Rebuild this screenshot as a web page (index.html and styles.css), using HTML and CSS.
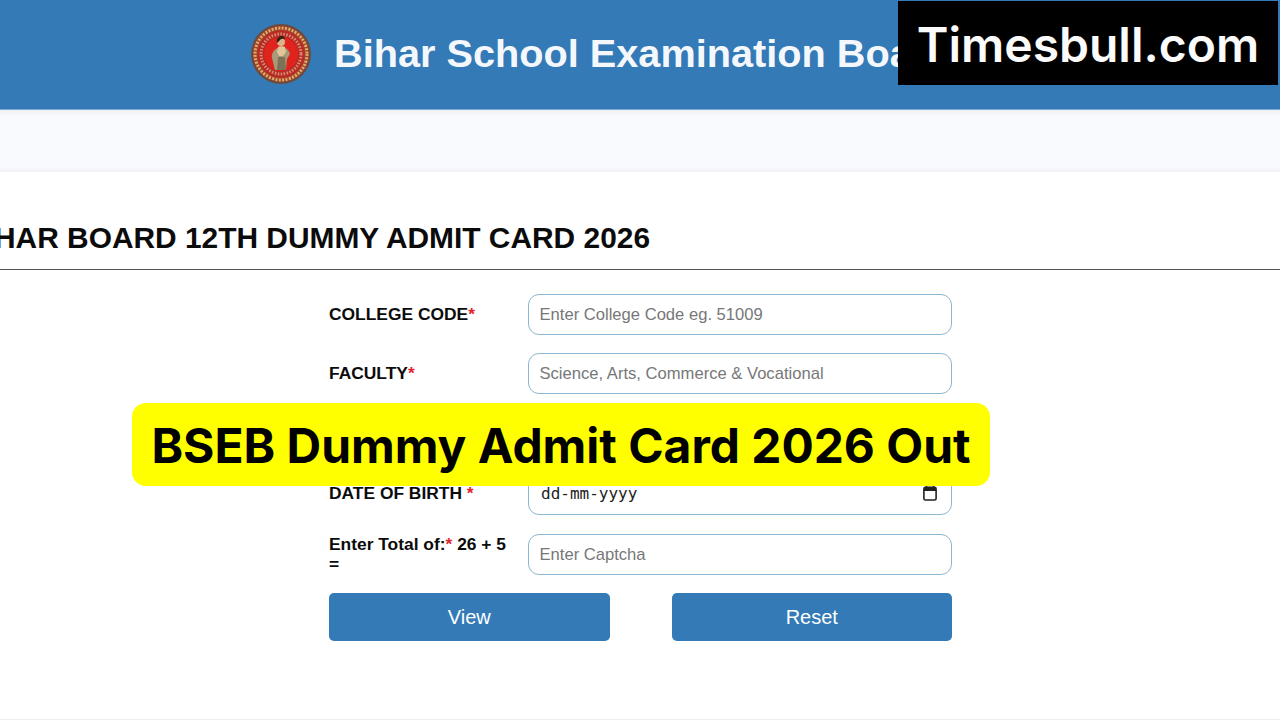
FILE: index.html
```html
<!DOCTYPE html>
<html lang="en">
<head>
    <meta charset="UTF-8">
    <title>BSEB Dummy Admit Card 2026 Out</title>
    <link rel="stylesheet" href="styles.css">
</head>
<body>
    <header class="site-header">
        <svg class="seal" viewBox="0 0 60 60" aria-hidden="true">
            <circle cx="30" cy="30" r="30" fill="#6d4a3c"/>
            <circle cx="30" cy="30" r="28" fill="#a8402c"/>
            <circle cx="30" cy="30" r="26" fill="none" stroke="#d8ae68" stroke-width="3" stroke-dasharray="2 1.4"/>
            <circle cx="30" cy="30" r="23.5" fill="#b92a22"/>
            <circle cx="30" cy="30" r="20" fill="none" stroke="#e3b9a0" stroke-width="3" stroke-dasharray="1.5 1.5" opacity="0.7"/>
            <circle cx="30" cy="30" r="17" fill="#e0231c"/>
            <path d="M24 46c-1-4-2-8-3-12s2-9 6-10l7 0c3 1 4 3 5 6l-3 5-1 11z" fill="#a89a78"/>
            <path d="M27 23c1-1 6-1 7 0l1 5-3 4h-4l-2-4z" fill="#e2c49a"/>
            <circle cx="30" cy="18" r="4" fill="#d9b48a"/>
            <path d="M26 19c-1-5 2-7 4.500-7s3.500 2 3.500 3.500c-2-1-3.500-1-4.500 0s-1.500 2-3.500 3.500z" fill="#33211a"/>
            <path d="M27 33h7l1 13h-9z" fill="#7d7258"/>
        </svg>
        <div class="site-title">Bihar School Examination Board</div>
    </header>
    <div class="sub-bar"></div>

    <main class="card">
        <h1 class="card-title">HAR BOARD 12TH DUMMY ADMIT CARD 2026</h1>
        <form class="admit-form">
            <div class="form-row first-row">
                <label class="form-label">COLLEGE CODE<span class="req">*</span></label>
                <input class="form-input" type="text" placeholder="Enter College Code eg. 51009">
            </div>
            <div class="form-row">
                <label class="form-label">FACULTY<span class="req">*</span></label>
                <input class="form-input" type="text" placeholder="Science, Arts, Commerce &amp; Vocational">
            </div>
            <div class="form-row">
                <label class="form-label">ROLL CODE<span class="req">*</span></label>
                <input class="form-input" type="text" placeholder="Enter Roll Code">
            </div>
            <div class="form-row">
                <label class="form-label">DATE OF BIRTH <span class="req">*</span></label>
                <div class="form-input date-field">
                    <span>dd-mm-yyyy</span>
                    <svg class="date-icon" viewBox="0 0 14 16" aria-hidden="true">
                        <path d="M3.500 0v3M10.500 0v3" stroke="#222" stroke-width="1.600" fill="none"/>
                        <rect x="0.900" y="2.400" width="12.200" height="12.600" rx="1.500" fill="none" stroke="#222" stroke-width="1.600"/>
                        <rect x="1" y="2.500" width="12" height="3.500" fill="#222"/>
                    </svg>
                </div>
            </div>
            <div class="form-row">
                <label class="form-label">Enter Total of:<span class="req">*</span> 26 + 5 =</label>
                <input class="form-input" type="text" placeholder="Enter Captcha">
            </div>
            <div class="form-buttons">
                <button class="form-button" type="button">View</button>
                <button class="form-button" type="button">Reset</button>
            </div>
        </form>
    </main>

    <div class="brand-badge">Timesbull.com</div>
    <div class="headline-badge">BSEB Dummy Admit Card 2026 Out</div>
</body>
</html>
```

FILE: styles.css
```css
html, body {
    margin: 0;
    height: 720px;
    overflow: hidden;
}
body {
    position: relative;
    background: #fff;
    color: #0b0b0b;
    font-family: "Liberation Sans", Arial, sans-serif;
}
.site-header {
    height: 110px;
    background: #337ab7;
    display: flex;
    align-items: center;
    gap: 23px;
    padding: 0 0 2px 251px;
    box-sizing: border-box;
    border-bottom: 1px solid #7aa9d4;
}
.seal {
    width: 60px;
    height: 60px;
    flex: none;
}
.site-title {
    color: #f4f7fb;
    font-size: 39.7px;
    font-weight: bold;
    white-space: nowrap;
}
.sub-bar {
    height: 62px;
    background: linear-gradient(#eff1f5, #f8fafe 7px, #f8fafe 57px, #eff1f5);
}
.card {
    height: 548px;
    border-bottom: 1px solid #eee;
    box-sizing: border-box;
}
.card-title {
    margin: 0 0 0 -6px;
    height: 98px;
    box-sizing: border-box;
    padding-top: 48px;
    font-size: 29.9px;
    line-height: 36px;
    font-weight: bold;
    white-space: nowrap;
    border-bottom: 1px solid #555;
}
.admit-form {
    width: 623px;
    margin: 24px 0 0 329px;
    display: flex;
    flex-direction: column;
    gap: 19.3px;
}
.form-row {
    display: flex;
    align-items: center;
    height: 41px;
}
.first-row {
    margin-bottom: -1px;
}
.form-label {
    width: 199px;
    flex: none;
    box-sizing: border-box;
    padding: 0 15px 2px 0;
    font-size: 17.4px;
    line-height: 20px;
    font-weight: bold;
}
.req {
    color: #e0262c;
}
.form-input {
    flex: 1;
    min-width: 0;
    height: 41px;
    box-sizing: border-box;
    padding: 0 10.5px;
    border: 1px solid #8db6d0;
    border-radius: 11px;
    background: #fff;
    font-family: "Liberation Sans", Arial, sans-serif;
    font-size: 16.6px;
    color: #222;
}
.form-input::placeholder {
    color: #777;
    opacity: 1;
}
.date-field {
    display: flex;
    align-items: center;
    justify-content: space-between;
    padding: 0 14px 2px 12px;
    font-family: "DejaVu Sans Mono", monospace;
    font-size: 16px;
}
.date-icon {
    width: 14px;
    height: 16px;
    flex: none;
}
.form-buttons {
    display: flex;
    justify-content: space-between;
    margin-top: -1.5px;
}
.form-button {
    width: 280.5px;
    height: 48px;
    padding: 2px 0 0;
    border: 0;
    border-radius: 5px;
    background: #337ab7;
    color: #fff;
    font-family: "Liberation Sans", Arial, sans-serif;
    font-size: 20px;
}
.brand-badge {
    position: absolute;
    left: 898px;
    top: 1px;
    width: 380px;
    height: 84px;
    background: #000;
    color: #fbfbfb;
    font-family: "Inter", "Noto Sans", sans-serif;
    font-size: 48px;
    font-weight: 600;
    line-height: 88px;
    text-align: center;
}
.headline-badge {
    position: absolute;
    left: 132px;
    top: 403px;
    width: 858px;
    height: 83px;
    border-radius: 14px;
    background: #ffff00;
    color: #000;
    font-family: "Inter", "Noto Sans", sans-serif;
    font-size: 47.9px;
    font-weight: 700;
    line-height: 86px;
    text-align: center;
    white-space: nowrap;
}
```
